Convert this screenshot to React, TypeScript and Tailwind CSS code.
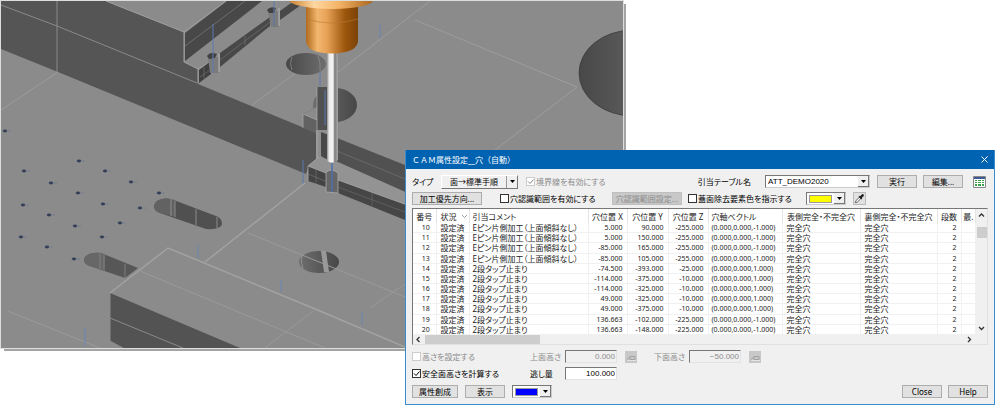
import { useState } from "react";
import type { ReactNode } from "react";

interface HoleRow {
  no: number;
  comment: string;
  x: string;
  y: string;
  z: string;
  vector: string;
}

const DOWN = "(0.000,0.000,-1.000)";
const UP = "(0.000,0.000,1.000)";
const PIN = "Eピン片側加工（上面傾斜なし）";
const TAP = "2段タップ止まり";

const rows: HoleRow[] = [
  { no: 10, comment: PIN, x: "5.000", y: "90.000", z: "-255.000", vector: DOWN },
  { no: 11, comment: PIN, x: "5.000", y: "150.000", z: "-255.000", vector: DOWN },
  { no: 12, comment: PIN, x: "-85.000", y: "165.000", z: "-255.000", vector: DOWN },
  { no: 13, comment: PIN, x: "-85.000", y: "105.000", z: "-255.000", vector: DOWN },
  { no: 14, comment: TAP, x: "-74.500", y: "-393.000", z: "-25.000", vector: UP },
  { no: 15, comment: TAP, x: "-114.000", y: "-375.000", z: "-10.000", vector: UP },
  { no: 16, comment: TAP, x: "-114.000", y: "-325.000", z: "-10.000", vector: UP },
  { no: 17, comment: TAP, x: "49.000", y: "-325.000", z: "-10.000", vector: UP },
  { no: 18, comment: TAP, x: "49.000", y: "-375.000", z: "-10.000", vector: UP },
  { no: 19, comment: TAP, x: "136.663", y: "-102.000", z: "-225.000", vector: DOWN },
  { no: 20, comment: TAP, x: "136.663", y: "-148.000", z: "-225.000", vector: DOWN },
];

// tapped hole markers on the lower plate
const markers = [
  [6, 131], [25, 171], [80, 161], [106, 171], [52, 183], [132, 182], [79, 193], [160, 193],
  [24, 205], [104, 204], [141, 208], [50, 215], [76, 226], [121, 223], [22, 237], [103, 237],
  [48, 247], [75, 259],
];

function Scene() {
  return (
    <svg viewBox="0 0 627 352" className="h-[352px] w-[627px] [grid-area:1/1]" role="img" aria-label="3D">
      <defs>
        <linearGradient id="spindle">
          <stop offset="0" stopColor="#b06a1c" />
          <stop offset=".22" stopColor="#f2b66e" />
          <stop offset=".4" stopColor="#e8a257" />
          <stop offset=".75" stopColor="#9c560d" />
          <stop offset="1" stopColor="#7a4208" />
        </linearGradient>
        <linearGradient id="collar">
          <stop offset="0" stopColor="#c77f2f" />
          <stop offset=".3" stopColor="#ffd7a2" />
          <stop offset=".6" stopColor="#f3b365" />
          <stop offset="1" stopColor="#a9651c" />
        </linearGradient>
        <linearGradient id="shaft">
          <stop offset="0" stopColor="#8f8f8f" />
          <stop offset=".2" stopColor="#ededed" />
          <stop offset=".55" stopColor="#f5f5f5" />
          <stop offset=".7" stopColor="#7d7d7d" />
          <stop offset="1" stopColor="#a8a8a8" />
        </linearGradient>
        <linearGradient id="bore">
          <stop offset="0" stopColor="#484848" />
          <stop offset="1" stopColor="#6e6e6e" />
        </linearGradient>
        <linearGradient id="boreDark">
          <stop offset="0" stopColor="#6e6e6e" />
          <stop offset="1" stopColor="#474747" />
        </linearGradient>
        <clipPath id="view">
          <path d="M1 1H623V348H1z" />
        </clipPath>
      </defs>
      <path d="M4 4H626V351H4z" fill="#a4a4a4" />
      <path d="M0 0H624V349H0z" fill="#dcdedc" />
      <g clipPath="url(#view)">
        <path d="M0 0H627V352H0z" fill="#8b8b8b" />

        {/* long wall */}
        <path d="M1 1H106L184 32V62L198 69V84L302 127L319 134V157L309 165L306 174L58 72L1 49z" fill="#555" />
        <path d="M1 5L57 26L197 83M57 1V72" fill="none" stroke="#8a8a8a" />
        <path d="M58 72L1 110M300 70L252 105" stroke="#9c9c9c" />
        <path d="M106 1L184 32L226 1M184 32V62" fill="none" stroke="#a0a0a0" />

        {/* upper rib */}
        <path d="M185 33L227 1H262L185 61z" fill="#484848" />
        <path d="M185 46L245 1" stroke="#777" strokeWidth=".8" />
        <path d="M184 62L198 69L210 62M198 69V83" fill="none" stroke="#a0a0a0" />
        <path d="M199 70L211 61V74L199 83z" fill="#3f3f3f" />
        <path d="M200 77L210 70M204 67V79" stroke="#777" strokeWidth=".6" />
        <path d="M220 53L270 17V26L220 67z" fill="#484848" />
        <path d="M280 11L291 3L301 5L280 20z" fill="#484848" />
        <path d="M220 60L270 22M245 36V45" stroke="#777" strokeWidth=".6" />
        <path d="M208 57h11v16h-9z" fill="#7b7b7b" />
        <path d="M219 54V72" stroke="#b5b5b5" />
        <path d="M207 56q3-5 10-2l-2 4-6 1z" fill="#414141" />
        <path d="M268 11h11v16h-8z" fill="#7b7b7b" />
        <path d="M279 8V26" stroke="#b5b5b5" />
        <path d="M267 10q3-4 9-2l-2 5h-5z" fill="#414141" />
        <path d="M213 24V73M274 1V26" stroke="#5b7bb0" />

        {/* guide lines on the upper plate */}
        <path d="M338 72L430 1M577 87L415 20M577 87L495 150" stroke="#9d9d9d" />
        <path d="M380 24V38" stroke="#6885b3" strokeWidth=".9" />

        {/* bores */}
        <ellipse cx="306" cy="64" rx="20" ry="11" fill="url(#bore)" />
        <path d="M292 57q-3 7 0 13M318 56q3 7 2 15" fill="none" stroke="#999" strokeWidth=".6" />
        <ellipse cx="335" cy="105" rx="22" ry="17" fill="url(#boreDark)" />
        <ellipse cx="633" cy="73" rx="54" ry="43" fill="url(#bore)" stroke="#333" strokeWidth=".6" />
        <ellipse cx="319" cy="262" rx="20" ry="11" fill="url(#boreDark)" />
        <path d="M321 251H326L329 272H324z" fill="#999" />
        <path d="M302 256q-2 6 1 12" fill="none" stroke="#aaa" strokeWidth=".6" />

        {/* pocket next to the cutter */}
        <path d="M303 114L317 107V134L303 128z" fill="#626262" />
        <path d="M303 114L317 107V120z" fill="#8b8b8b" />
        <path d="M303 128V114L317 120" fill="none" stroke="#a4a4a4" strokeWidth=".8" />
        <path d="M317 87H329V130H317z" fill="#515151" />
        <path d="M316 130H329V160H316z" fill="#909090" />
        <path d="M321 132L329 135V161L321 156z" fill="#484848" />
        <path d="M317 87V158" stroke="#a8a8a8" strokeWidth=".8" />

        {/* lower rib */}
        <path d="M337 138L410 167V196L337 164z" fill="#515151" />
        <path d="M337 151L410 181" stroke="#737373" strokeWidth=".7" />
        <path d="M308 166L319 157L338 162L410 194V207L338 180L326 174z" fill="#939393" />
        <path d="M308 166L326 173V187L308 181z" fill="#444" />
        <path d="M308 174L325 181M316 170V184" stroke="#777" strokeWidth=".6" />
        <path d="M338 180L410 206V222L338 193z" fill="#464646" />
        <path d="M338 187L410 214M372 192V206" stroke="#6d6d6d" strokeWidth=".6" />
        <path d="M308 181V166L319 157M308 166L326 173M338 180L410 206" fill="none" stroke="#a8a8a8" strokeWidth=".8" />
        <path d="M326 172q6-4 12 1v20l-12-1z" fill="#666" stroke="#aaa" strokeWidth=".8" />
        <path d="M332 163V192" stroke="#4c70ad" strokeWidth="1.5" />
        <path d="M303 160V184M320 72V86M325 90V125" stroke="#5b7bb0" />

        {/* slots */}
        <path d="M154 206C155 200 163 197 171 199L216 216Q222 218 222 224Q221 230 206 229L160 213Q154 211 154 206z" fill="#505050" />
        <path d="M154 206C155 200 163 197 171 199L175 201V217L160 213Q154 211 154 206z" fill="#626262" />
        <path d="M171 199V216M175 201V217M196 209V225M217 217V228" stroke="#999" strokeWidth=".8" />
        <path d="M84 260C85 254 93 252 101 253L138 268L125 278L90 266Q84 264 84 260z" fill="#575757" />
        <path d="M84 260C85 254 93 252 101 253L105 255V271L90 266Q84 264 84 260z" fill="#676767" />
        <path d="M100 253V269M104 255V270M125 264V278" stroke="#888" strokeWidth=".8" />

        {/* raised block in front */}
        <path d="M110 293L240 348H123L110 341z" fill="#535353" />
        <path d="M110 293L168 248L320 311L412 350M205 262L305 183" fill="none" stroke="#a3a3a3" strokeWidth="1.4" />
        <path d="M110 318L183 348M110 293V341L123 348" fill="none" stroke="#8a8a8a" />
        <path
          d="M140 271L325 348M248 233L410 299M265 348L313 311M370 308L405 284M8 311L100 348"
          fill="none"
          stroke="#9a9a9a"
        />
        <path d="M85 328V346M198 245V258M281 280V292M362 312V325" stroke="#6487b8" strokeWidth=".9" />

        {markers.map(([x, y]) => (
          <g key={`${x}-${y}`}>
            <path d={`M${x - 4} ${y}h9`} stroke="#6c7a90" strokeWidth=".8" />
            <ellipse cx={x - 1} cy={y} rx="2" ry="1.4" fill="#333e55" />
          </g>
        ))}

        {/* cutter and holder */}
        <path d="M327 50H338V160Q333 165 327 161z" fill="url(#shaft)" />
        <path d="M306 7H358V42Q356 50 345 52Q332 55 318 52Q308 50 306 42z" fill="url(#spindle)" />
        <path d="M306 19Q332 27 358 19" fill="none" stroke="#b87830" strokeWidth=".6" />
        <path d="M289 1H373Q368 8 332 9Q296 8 289 1z" fill="url(#collar)" />
      </g>
    </svg>
  );
}

function Button({ children, className = "", disabled = false }: { children: ReactNode; className?: string; disabled?: boolean }) {
  return (
    <button
      type="button"
      disabled={disabled}
      className={`h-[13px] shrink-0 border border-[#adadad] bg-[#e1e1e1] text-center leading-[11px] disabled:border-[#bfbfbf] disabled:bg-[#c8c8c8] disabled:text-[#8c8c8c] ${className}`}
    >
      {children}
    </button>
  );
}

function Check({ label, on = false, disabled = false, className = "" }: { label: string; on?: boolean; disabled?: boolean; className?: string }) {
  const [checked, setChecked] = useState(on);
  return (
    <label className={`flex shrink-0 items-center gap-px ${disabled ? "text-[#8c8c8c]" : ""} ${className}`}>
      <span className="grid">
        <input
          type="checkbox"
          checked={checked}
          disabled={disabled}
          onChange={(e) => setChecked(e.target.checked)}
          className="size-[9px] appearance-none border border-[#333] bg-white [grid-area:1/1] disabled:border-[#ccc]"
        />
        {checked && (
          <svg viewBox="0 0 9 9" className="pointer-events-none size-[9px] [grid-area:1/1]">
            <path d="M2 4.5L4 6.5L7.5 2.5" fill="none" stroke="currentColor" strokeWidth="1" />
          </svg>
        )}
      </span>
      {label}
    </label>
  );
}

function Arrow() {
  return (
    <span className="flex h-full w-[11px] shrink-0 items-center justify-center border-r border-b border-[#777] bg-[#f0f0f0]">
      <svg viewBox="0 0 5 3" className="h-[3px] w-[5px]">
        <path d="M0 0H5L2.5 3z" />
      </svg>
    </span>
  );
}

function ColorSelect({ label, swatch }: { label: string; swatch: string }) {
  return (
    <div className="flex h-[13px] w-[40px] shrink-0 items-center border border-t-[#777] border-r-[#ccc] border-b-[#ccc] border-l-[#777] bg-white pl-[2px]">
      <select aria-label={label} className={`mr-[2px] h-[8px] min-w-0 flex-1 appearance-none border border-[#999] text-transparent ${swatch}`} />
      <Arrow />
    </div>
  );
}

function NumberField({ id, value, disabled = false }: { id: string; value: string; disabled?: boolean }) {
  return (
    <input
      id={id}
      type="text"
      defaultValue={value}
      disabled={disabled}
      className="h-[13px] w-[52px] shrink-0 border border-t-[#777] border-r-[#e3e3e3] border-b-[#e3e3e3] border-l-[#777] bg-white pr-px text-right font-['Liberation_Sans',sans-serif] text-[8px] leading-[11px] disabled:bg-[#f0f0f0] disabled:text-[#8c8c8c]"
    />
  );
}

function PickButton({ label }: { label: string }) {
  return (
    <button type="button" disabled aria-label={label} className="ml-[8px] flex size-[12px] shrink-0 items-center justify-center bg-[#c8c8c8]">
      <svg viewBox="0 0 12 12" className="size-[12px]">
        <path d="M2 8.5L5 6M5 8.5V5.5H10V8.5z" fill="none" stroke="#a2a2a2" />
        <path d="M2.5 9.5H11" stroke="#e4e4e4" />
      </svg>
    </button>
  );
}

function Chevron({ dir, label }: { dir: "up" | "down" | "left" | "right"; label: string }) {
  const paths = {
    up: "M2 5.5L4.5 3L7 5.5",
    down: "M2 3L4.5 5.5L7 3",
    left: "M5.5 2L3 4.5L5.5 7",
    right: "M3 2L5.5 4.5L3 7",
  };
  return (
    <button type="button" aria-label={label} className="flex shrink-0 items-center justify-center">
      <svg viewBox="0 0 9 9" className="size-[9px]">
        <path d={paths[dir]} fill="none" stroke="#333" strokeWidth="1.3" />
      </svg>
    </button>
  );
}

function HoleTable() {
  const num = "pr-[4px] text-right text-[7px]";
  return (
    <div className="mt-[2px] border border-t-[#777] border-r-[#e0e0e0] border-b-[#e0e0e0] border-l-[#777] bg-[#f0f0f0]">
      <div className="flex">
        <div className="min-w-0 flex-1 overflow-hidden bg-white">
          <table className="h-[126px] w-full table-fixed border-collapse leading-[9px] whitespace-nowrap text-[#222] [&_td]:border-r [&_td]:border-b [&_td]:border-[#f1f1f1] [&_td]:py-0 [&_th]:border-r [&_th]:border-[#e4e4e4] [&_th]:p-0 [&_th]:font-normal">
            <colgroup>
              <col className="w-[23px]" />
              <col className="w-[33px]" />
              <col className="w-[119px]" />
              <col className="w-[39px]" />
              <col className="w-[41px]" />
              <col className="w-[40px]" />
              <col className="w-[74px]" />
              <col className="w-[78px]" />
              <col className="w-[77px]" />
              <col className="w-[24px]" />
              <col />
            </colgroup>
            <thead>
              <tr className="h-[14px]">
                <th>番号</th>
                <th>
                  <span className="flex items-center gap-[5px] pl-[4px]">
                    状況
                    <svg viewBox="0 0 5 3" className="h-[3px] w-[5px]">
                      <path d="M0 0L2.5 2.5L5 0" fill="none" stroke="#888" strokeWidth=".8" />
                    </svg>
                  </span>
                </th>
                <th className="text-left"><span className="pl-[3px]">引当コメント</span></th>
                <th>穴位置 X</th>
                <th>穴位置 Y</th>
                <th>穴位置 Z</th>
                <th className="text-left"><span className="pl-[3px]">穴軸ベクトル</span></th>
                <th>表側完全・不完全穴</th>
                <th>裏側完全・不完全穴</th>
                <th>段数</th>
                <th className="overflow-hidden">最.</th>
              </tr>
            </thead>
            <tbody>
              {rows.map((row) => (
                <tr key={row.no}>
                  <td className="pl-[3px] text-center text-[7px]">{row.no}</td>
                  <td className="pl-[4px]">設定済</td>
                  <td className="pl-[3px]">{row.comment}</td>
                  <td className={num}>{row.x}</td>
                  <td className={num}>{row.y}</td>
                  <td className={num}>{row.z}</td>
                  <td className="pl-[3px] text-[7px]">{row.vector}</td>
                  <td className="pl-[4px]">完全穴</td>
                  <td className="pl-[4px]">完全穴</td>
                  <td className={num}>2</td>
                  <td />
                </tr>
              ))}
            </tbody>
          </table>
        </div>
        <div className="flex w-[11px] shrink-0 flex-col items-center py-[2px]">
          <Chevron dir="up" label="上へ" />
          <div className="mt-[7px] h-[11px] w-[10px] bg-[#cdcdcd]" />
          <div className="mt-auto flex">
            <Chevron dir="down" label="下へ" />
          </div>
        </div>
      </div>
      <div className="flex h-[9px] items-stretch pr-[13px] pl-px">
        <Chevron dir="left" label="左へ" />
        <div className="ml-[2px] w-[115px] bg-[#cdcdcd]" />
        <div className="flex-1" />
        <Chevron dir="right" label="右へ" />
      </div>
    </div>
  );
}

function AttributeDialog() {
  return (
    <section
      aria-label="ＣＡＭ属性設定__穴（自動）"
      className="z-10 mt-[150px] ml-[405px] min-w-[590px] self-start border border-t-0 border-[#3a8ccc] bg-[#f0f0f0] font-['Noto_Sans','Noto_Sans_CJK_JP',sans-serif] text-[8px] leading-[12px] text-black [font-feature-settings:'palt'] [grid-area:1/1]"
    >
      <header className="flex h-[19px] items-center bg-[#0063b1] pr-[5px] pl-[6px] text-white [font-feature-settings:normal]">
        <h1>ＣＡＭ属性設定__穴（自動）</h1>
        <button type="button" aria-label="閉じる" className="ml-auto">
          <svg viewBox="0 0 9 9" className="size-[9px]">
            <path d="M1.5 1.5L7.5 7.5M7.5 1.5L1.5 7.5" stroke="#fff" />
          </svg>
        </button>
      </header>

      <div className="px-[6px] pt-[5px] pb-[5px]">
        <div className="flex h-[15px] items-center">
          <span className="w-[29px] shrink-0">タイプ</span>
          <div className="flex h-[14px] w-[77px] shrink-0 border border-t-white border-r-[#777] border-b-[#777] border-l-white">
            <button type="button" className="flex-1 leading-[12px]">面→標準手順</button>
            <button type="button" aria-label="タイプを選択" className="flex w-[11px] items-center justify-center border-l border-[#999]">
              <svg viewBox="0 0 5 3" className="h-[3px] w-[5px]">
                <path d="M0 0H5L2.5 3z" />
              </svg>
            </button>
          </div>
          <Check label="境界線を有効にする" on disabled className="ml-[8px]" />
          <label htmlFor="table-name" className="mr-[14px] ml-auto shrink-0">引当テーブル名</label>
          <div className="grid w-[105px] shrink-0 items-center border border-t-[#777] border-r-[#ccc] border-b-[#ccc] border-l-[#777] bg-white">
            <select
              id="table-name"
              className="h-[11px] w-full appearance-none pl-[2px] font-['Liberation_Sans',sans-serif] text-[8px] leading-[11px] [grid-area:1/1]"
            >
              <option>ATT_DEMO2020</option>
            </select>
            <span className="pointer-events-none h-[11px] justify-self-end [grid-area:1/1]">
              <Arrow />
            </span>
          </div>
          <Button className="ml-[7px] w-[40px]">実行</Button>
          <Button className="ml-[6px] w-[40px]">編集...</Button>
          <button type="button" aria-label="テーブル" className="mr-[2px] ml-[10px] shrink-0">
            <svg viewBox="0 0 13 12" className="h-[12px] w-[13px]">
              <path d="M.5 .5H12.5V11.5H.5z" fill="#fff" stroke="#888" />
              <path d="M1 1H12V3H1z" fill="#3d5a96" />
              <path d="M2 4H4V5H2zM5 4H8V5H5zM9 4H11V5H9zM2 6H4V7H2zM5 6H8V7H5zM9 6H11V7H9zM2 8H4V10H2zM5 8H8V10H5zM9 8H11V10H9z" fill="#3ca34d" />
            </svg>
          </button>
        </div>

        <div className="mt-[2px] flex h-[15px] items-center">
          <Button className="w-[70px]">加工優先方向...</Button>
          <Check label="穴認識範囲を有効にする" className="ml-[18px] w-[112px]" />
          <Button disabled className="w-[70px]">穴認識範囲設定...</Button>
          <Check label="蓋面除去要素色を指示する" className="ml-[6px] w-[118px]" />
          <ColorSelect label="蓋面除去要素色" swatch="bg-[#ffff00]" />
          <button type="button" aria-label="色を取得" className="ml-[7px] flex size-[13px] shrink-0 items-center justify-center border border-[#bbb] bg-[#e1e1e1]">
            <svg viewBox="0 0 12 12" className="size-[11px] shrink-0">
              <path d="M1.5 10.5L2 8.5L6 4.5L7.5 6L3.5 10z" fill="#fff" stroke="#333" strokeWidth=".8" />
              <path d="M5.5 3.5L8.5 6.5" stroke="#222" strokeWidth="1.4" />
              <path d="M7.5 4.5L9.5 2.5" stroke="#222" strokeWidth="2.6" strokeLinecap="round" />
            </svg>
          </button>
        </div>

        <HoleTable />

        <div className="mt-[4px] flex h-[15px] items-center">
          <Check label="高さを設定する" disabled className="w-[118px]" />
          <label htmlFor="top-height" className="w-[35px] shrink-0 text-[#8c8c8c]">上面高さ</label>
          <NumberField id="top-height" value="0.000" disabled />
          <PickButton label="上面高さを取得" />
          <label htmlFor="bottom-height" className="ml-[17px] w-[35px] shrink-0 text-[#8c8c8c]">下面高さ</label>
          <NumberField id="bottom-height" value="−50.000" disabled />
          <PickButton label="下面高さを取得" />
        </div>

        <div className="mt-[2px] flex h-[15px] items-center">
          <Check label="安全面高さを計算する" on className="w-[118px]" />
          <label htmlFor="clearance" className="w-[35px] shrink-0">逃し量</label>
          <NumberField id="clearance" value="100.000" />
        </div>

        <div className="mt-[3px] flex h-[15px] items-center">
          <Button className="w-[46px]">属性創成</Button>
          <Button className="mr-[7px] ml-[7px] w-[40px]">表示</Button>
          <ColorSelect label="表示色" swatch="bg-[#0000ff]" />
          <Button className="ml-auto w-[40px]">Close</Button>
          <Button className="ml-[6px] w-[40px]">Help</Button>
        </div>
      </div>
    </section>
  );
}

export default function App() {
  return (
    <main className="grid bg-white">
      <Scene />
      <AttributeDialog />
    </main>
  );
}
